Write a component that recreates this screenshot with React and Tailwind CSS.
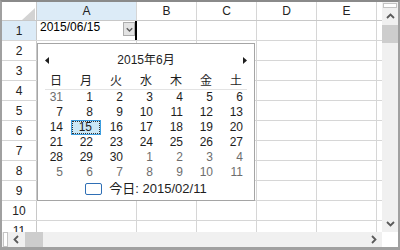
const SANS = "font-['Liberation_Sans','Noto_Sans_CJK_JP',sans-serif]"

const weeks = [
  [31, 1, 2, 3, 4, 5, 6],
  [7, 8, 9, 10, 11, 12, 13],
  [14, 15, 16, 17, 18, 19, 20],
  [21, 22, 23, 24, 25, 26, 27],
  [28, 29, 30, 1, 2, 3, 4],
  [5, 6, 7, 8, 9, 10, 11],
]

const dayNames = ['日', '月', '火', '水', '木', '金', '土']

function isOtherMonth(w, d) {
  return (w === 0 && d === 0) || (w === 4 && d >= 3) || w === 5
}

function Chevron({ dir, className }) {
  const pts = {
    up: '1,6 4.5,2.5 8,6',
    down: '1,3 4.5,6.5 8,3',
    left: '6,1 2.5,4.5 6,8',
    right: '3,1 6.5,4.5 3,8',
  }
  return (
    <svg className={className} width="9" height="9" viewBox="0 0 9 9">
      <polyline points={pts[dir]} fill="none" stroke="#5a5a5a" strokeWidth="1.8" />
    </svg>
  )
}

function Calendar() {
  return (
    <div className={`absolute left-[35px] top-[41px] w-[218px] h-[158px] bg-white border border-[#a5a5a5] ${SANS} text-[#1e1e1e]`}>
      {/* Month header */}
      <div className="mt-[8px] h-[16px] flex items-center justify-between px-[7px]">
        <svg width="4" height="7" viewBox="0 0 4 7"><polygon points="4,0 0,3.5 4,7" fill="#1e1e1e" /></svg>
        <span className="text-[12px] leading-[16px]">2015年6月</span>
        <svg width="4" height="7" viewBox="0 0 4 7"><polygon points="0,0 4,3.5 0,7" fill="#1e1e1e" /></svg>
      </div>

      {/* Weekday names */}
      <div className="mt-[6px] mx-[3px] grid grid-cols-[repeat(7,30px)] h-[15px] text-[12px] leading-[15px]">
        {dayNames.map((d) => (
          <span key={d} className="text-center">{d}</span>
        ))}
      </div>
      <div className="mx-[7px] h-px bg-[#e3e3e3]" />

      {/* Dates */}
      <div className="mx-[3px] grid grid-cols-[repeat(7,30px)] text-[12px] leading-[13px]">
        {weeks.map((week, w) =>
          week.map((d, i) => {
            const selected = w === 2 && i === 1
            return (
              <div
                key={`${w}-${i}`}
                className={`h-[15px] flex items-center justify-end pr-[8px] ${isOtherMonth(w, i) ? 'text-[#6d6d6d]' : ''} ${selected ? 'bg-[#cce8f6] border border-[#3c9ee0] outline-1 outline-dotted outline-[#333] -outline-offset-2 pr-[7px]' : ''}`}
              >
                {d}
              </div>
            )
          })
        )}
      </div>

      {/* Today */}
      <div className="mt-[2px] h-[14px] flex items-center justify-center gap-[7px] text-[13px] leading-[14px]">
        <span className="w-[17px] h-[12px] rounded-[2px] border-[1.5px] border-[#2f6fb5]" />
        <span>今日: 2015/02/11</span>
      </div>
    </div>
  )
}

function SheetRow({ n }) {
  const active = n === 1
  return (
    <div className="flex h-[20px] shrink-0 border-b border-[#d6d6d6]">
      <div className={`w-[35px] shrink-0 border-r border-[#c8c8c8] flex items-center justify-center text-[12px] text-[#222] ${active ? 'bg-[#dcebf7]' : 'bg-white'}`}>
        {n}
      </div>
      <div className={`w-[100px] shrink-0 relative ${active ? 'border-r-2 border-black' : 'border-r border-[#d6d6d6]'}`}>
        {active && (
          <>
            <span className="absolute left-[3px] top-0 text-[12px] leading-[12px] text-black">2015/06/15</span>
            <div className="absolute left-[86px] top-[1px] w-[12px] h-[14px] border border-[#adadad] bg-[#e3e3e3] flex items-center justify-center">
              <Chevron dir="down" className="w-[7px] h-[7px]" />
            </div>
          </>
        )}
      </div>
      <div className="w-[60px] shrink-0 border-r border-[#d6d6d6]" />
      <div className="w-[60px] shrink-0 border-r border-[#d6d6d6]" />
      <div className="w-[60px] shrink-0 border-r border-[#d6d6d6]" />
      <div className="w-[60px] shrink-0 border-r border-[#d6d6d6]" />
      <div className="flex-1" />
    </div>
  )
}

export default function App() {
  const rows = [1, 2, 3, 4, 5, 6, 7, 8, 9, 10, 11]

  return (
    <div className={`w-[400px] h-[250px] bg-white border-2 border-b-[3px] border-[#a0a0a0] border-t-[#8a8a8a] flex flex-col ${SANS}`}>
      <div className="flex h-[230px] shrink-0">
        {/* Sheet */}
        <div className="relative w-[380px] shrink-0 overflow-hidden flex flex-col">
          <div className="flex h-[19px] shrink-0 border-b border-[#c8c8c8] text-[12px] text-[#222]">
            <div className="w-[35px] shrink-0 border-r border-[#c8c8c8] relative">
              <svg className="absolute left-[20px] top-[6px]" width="13" height="12" viewBox="0 0 13 12">
                <polygon points="13,0 13,12 0,12" fill="#d3d3d3" />
              </svg>
            </div>
            <div className="w-[100px] shrink-0 border-r border-[#d6d6d6] bg-[#dcebf7] flex items-center justify-center">A</div>
            <div className="w-[60px] shrink-0 border-r border-[#d6d6d6] flex items-center justify-center">B</div>
            <div className="w-[60px] shrink-0 border-r border-[#d6d6d6] flex items-center justify-center">C</div>
            <div className="w-[60px] shrink-0 border-r border-[#d6d6d6] flex items-center justify-center">D</div>
            <div className="w-[60px] shrink-0 border-r border-[#d6d6d6] flex items-center justify-center">E</div>
            <div className="flex-1" />
          </div>
          {rows.map((n) => (
            <SheetRow key={n} n={n} />
          ))}
          <Calendar />
        </div>

        {/* Vertical scrollbar */}
        <div className="w-[16px] shrink-0 bg-[#f0f0f0] flex flex-col">
          <div className="mt-[1px] h-[5px] border border-[#c4c4c4] bg-white mx-[1px]" />
          <div className="h-[17px] flex items-center justify-center">
            <Chevron dir="up" />
          </div>
          <div className="h-[18px] bg-[#cdcdcd]" />
          <div className="flex-1" />
          <div className="h-[17px] flex items-center justify-center">
            <Chevron dir="down" />
          </div>
        </div>
      </div>

      {/* Horizontal scrollbar */}
      <div className="flex h-[15px] shrink-0">
        <div className="w-[380px] shrink-0 bg-[#f0f0f0] flex">
          <div className="ml-[1px] w-[5px] border border-[#c4c4c4] bg-white" />
          <div className="w-[17px] flex items-center justify-center">
            <Chevron dir="left" />
          </div>
          <div className="w-[18px] bg-[#cdcdcd]" />
          <div className="flex-1" />
          <div className="w-[17px] flex items-center justify-center">
            <Chevron dir="right" />
          </div>
        </div>
        <div className="flex-1 bg-white" />
      </div>
    </div>
  )
}
